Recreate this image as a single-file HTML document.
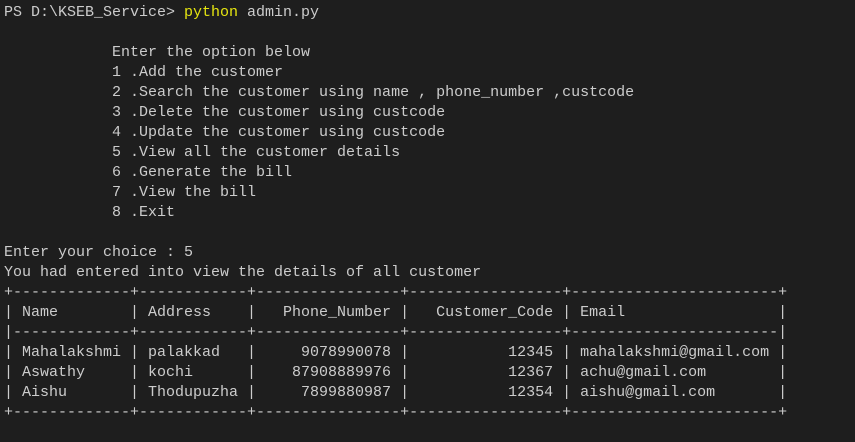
<!DOCTYPE html>
<html><head><meta charset="utf-8"><style>
html,body{margin:0;padding:0;background:#1e1e1e;width:855px;height:442px;overflow:hidden}
pre{margin:0;position:absolute;left:4px;top:3px;font-family:"Liberation Mono",monospace;font-size:15px;line-height:20px;color:#cccccc}
.y{color:#e5e510}
</style></head><body>
<pre>PS D:\KSEB_Service&gt; <span class="y">python</span> admin.py

            Enter the option below
            1 .Add the customer
            2 .Search the customer using name , phone_number ,custcode
            3 .Delete the customer using custcode
            4 .Update the customer using custcode
            5 .View all the customer details
            6 .Generate the bill
            7 .View the bill
            8 .Exit

Enter your choice : 5
You had entered into view the details of all customer
+-------------+------------+----------------+-----------------+-----------------------+
| Name        | Address    |   Phone_Number |   Customer_Code | Email                 |
|-------------+------------+----------------+-----------------+-----------------------|
| Mahalakshmi | palakkad   |     9078990078 |           12345 | mahalakshmi@gmail.com |
| Aswathy     | kochi      |    87908889976 |           12367 | achu@gmail.com        |
| Aishu       | Thodupuzha |     7899880987 |           12354 | aishu@gmail.com       |
+-------------+------------+----------------+-----------------+-----------------------+</pre>
</body></html>
